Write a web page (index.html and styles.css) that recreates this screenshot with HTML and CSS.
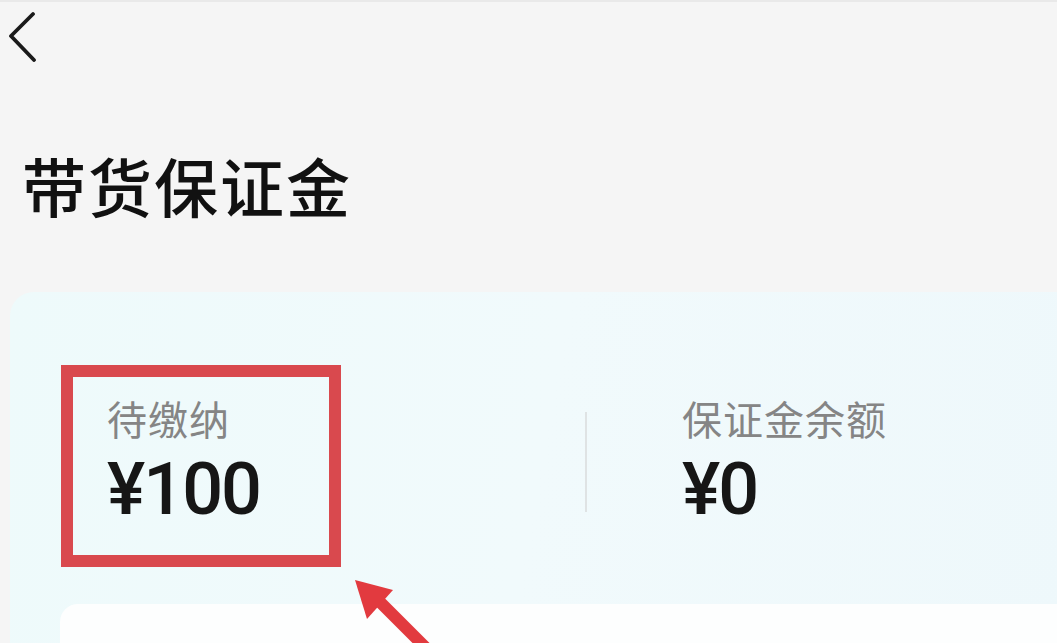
FILE: index.html
```html
<!DOCTYPE html>
<html lang="zh">
<head>
<meta charset="utf-8">
<title>带货保证金</title>
<link rel="stylesheet" href="styles.css">
</head>
<body>
<div class="page">
  <header class="nav">
    <svg class="back" width="40" height="60" viewBox="0 0 40 60" aria-hidden="true">
      <path d="M33 12 L11 34 L34 58" fill="none" stroke="#1a1a1a" stroke-width="3.8" stroke-linecap="round" stroke-linejoin="round"/>
    </svg>
  </header>
  <h1 class="title">带货保证金</h1>
  <section class="card">
    <div class="stats">
      <div class="stat stat-marked">
        <div class="stat-label">待缴纳</div>
        <div class="stat-value">¥100</div>
      </div>
      <div class="divider"></div>
      <div class="stat stat-plain">
        <div class="stat-label">保证金余额</div>
        <div class="stat-value">¥0</div>
      </div>
    </div>
    <div class="inner-card"></div>
  </section>
  <svg class="arrow" width="120" height="90" viewBox="0 0 120 90" aria-hidden="true">
    <path d="M30 30 L100 100" stroke="#e23a3f" stroke-width="12" fill="none"/>
    <path d="M5 8 L43 18 L17 47 Z" fill="#e23a3f"/>
  </svg>
</div>
</body>
</html>
```
FILE: styles.css
```css
html, body {
  margin: 0;
  padding: 0;
}
body {
  background: #f5f5f5;
  font-family: "Noto Sans CJK SC", "Noto Sans", sans-serif;
  overflow: hidden;
}
.page {
  position: relative;
  width: 1057px;
  height: 643px;
  overflow: hidden;
  border-top: 2px solid #e9e9e9;
  box-sizing: border-box;
}
.nav {
  height: 150px;
  display: flex;
  align-items: flex-start;
}
.back {
  display: block;
}
.title {
  margin: 0;
  padding-left: 22px;
  font-size: 64px;
  line-height: 64px;
  font-weight: 500;
  color: #111;
  letter-spacing: 2px;
  height: 64px;
}
.card {
  margin-top: 76px;
  margin-left: 10px;
  background: linear-gradient(100deg, #eefafb 0%, #f1fafc 50%, #eef8fb 100%);
  border-radius: 24px 0 0 0;
  padding: 73px 0 0 51px;
  height: 400px;
  box-sizing: border-box;
}
.stats {
  display: flex;
  align-items: flex-start;
}
.stat-marked {
  width: 280px;
  height: 202px;
  box-sizing: border-box;
  border: 12px solid #d9494e;
  padding: 21px 0 0 34px;
}
.stat-plain {
  margin-left: 95px;
  padding-top: 33px;
}
.divider {
  width: 2px;
  height: 100px;
  margin-top: 47px;
  margin-left: 244px;
  background: #dfe3e4;
}
.stat-label {
  font-size: 40px;
  line-height: 40px;
  color: #858585;
  letter-spacing: 1px;
}
.stat-value {
  margin-top: 16px;
  font-family: Roboto, "Noto Sans", sans-serif;
  font-size: 72px;
  line-height: 72px;
  font-weight: 500;
  color: #161616;
  letter-spacing: -2px;
}
.inner-card {
  margin-top: 37px;
  margin-left: -1px;
  height: 100px;
  background: #fdfefe;
  border-radius: 18px 0 0 0;
}
.arrow {
  position: absolute;
  left: 350px;
  top: 570px;
}
```
